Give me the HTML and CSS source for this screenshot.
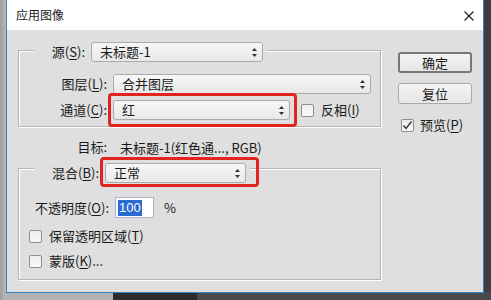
FILE: index.html
```html
<!DOCTYPE html>
<html lang="zh-CN">
<head>
    <meta charset="UTF-8">
    <meta name="viewport" content="width=device-width, initial-scale=1.0">
    <title>应用图像</title>
    <link rel="stylesheet" href="styles.css">
</head>

<body>
    <div class="dialog">
        <div class="titlebar">
            <span class="title">应用图像</span>
            <svg class="close" width="10" height="10" viewBox="0 0 10 10">
                <path d="M0.5 0.5 L9.5 9.5 M9.5 0.5 L0.5 9.5" stroke="#1a1a1a" stroke-width="1.1" fill="none"/>
            </svg>
        </div>

        <div class="content">
            <div class="main">
                <!-- nguồn -->
                <div class="group group-source">
                    <div class="group-head">
                        <span class="head-label source-label">源(<u>S</u>):</span>
                        <div class="select select-source">
                            <span>未标题-1</span>
                            <svg class="arrows" width="5" height="9" viewBox="0 0 5 9"><path d="M2.5 0 L5 3 L0 3 Z M2.5 9 L5 6 L0 6 Z" fill="#333"/></svg>
                        </div>
                    </div>
                    <div class="row row-layer">
                        <span class="row-label">图层(<u>L</u>):</span>
                        <div class="select select-layer">
                            <span>合并图层</span>
                            <svg class="arrows" width="5" height="9" viewBox="0 0 5 9"><path d="M2.5 0 L5 3 L0 3 Z M2.5 9 L5 6 L0 6 Z" fill="#333"/></svg>
                        </div>
                    </div>
                    <div class="row row-channel">
                        <span class="row-label">通道(<u>C</u>):</span>
                        <div class="mark mark-channel">
                            <div class="select select-channel">
                                <span>红</span>
                                <svg class="arrows" width="5" height="9" viewBox="0 0 5 9"><path d="M2.5 0 L5 3 L0 3 Z M2.5 9 L5 6 L0 6 Z" fill="#333"/></svg>
                            </div>
                        </div>
                        <label class="check check-invert"><span class="box"></span><span>反相(<u>I</u>)</span></label>
                    </div>
                </div>

                <div class="target">
                    <span class="target-label">目标:</span>
                    <span>未标题-1(红色通..., RGB)</span>
                </div>

                <!-- hòa trộn -->
                <div class="group group-blend">
                    <div class="group-head">
                        <span class="head-label blend-label">混合(<u>B</u>):</span>
                        <div class="mark mark-blend">
                            <div class="select select-blend">
                                <span>正常</span>
                                <svg class="arrows" width="5" height="9" viewBox="0 0 5 9"><path d="M2.5 0 L5 3 L0 3 Z M2.5 9 L5 6 L0 6 Z" fill="#333"/></svg>
                            </div>
                        </div>
                    </div>
                    <div class="row row-opacity">
                        <span class="opacity-label">不透明度(<u>O</u>):</span>
                        <div class="opacity-input"><span class="selected">100</span></div>
                        <span class="percent">%</span>
                    </div>
                    <label class="check check-row check-keep"><span class="box"></span><span>保留透明区域(<u>T</u>)</span></label>
                    <label class="check check-row check-mask"><span class="box"></span><span>蒙版(<u>K</u>)...</span></label>
                </div>
            </div>

            <div class="side">
                <button class="btn btn-default">确定</button>
                <button class="btn btn-reset">复位</button>
                <label class="check check-preview">
                    <span class="box">
                        <svg width="11" height="11" viewBox="0 0 11 11"><path d="M1.5 5.5 L4 8.5 L9.5 1.5" stroke="#333" stroke-width="1.4" fill="none"/></svg>
                    </span>
                    <span>预览(<u>P</u>)</span>
                </label>
            </div>
        </div>
    </div>
</body>
</html>
```

FILE: styles.css
```css
/* hộp thoại Apply Image */
* {
   box-sizing: border-box;
}

body {
   margin: 0;
   height: 300px;
   overflow: hidden;
   font-family: "Noto Sans CJK SC", "Noto Sans", sans-serif;
   font-size: 13px;
   color: #1a1a1a;
   background:
      linear-gradient(to right, #9d9d9d, #b9b9b9) left top / 6px 100% no-repeat,
      linear-gradient(to right, #b3b3b3 0 113px, #2c2c2c 113px 197px, #4a4a4a 197px) left bottom / 100% 8px no-repeat,
      #3e3e3e;
}

u {
   text-decoration-thickness: 1px;
   text-underline-offset: 2px;
}

.dialog {
   margin-left: 6px;
   width: 478px;
   height: 293px;
   border: 1px solid #2f84cc;
   border-top: none;
   background-color: #dfdfdf;
}

.titlebar {
   height: 30px;
   background-color: #fff;
   display: flex;
   align-items: center;
   justify-content: space-between;
   padding: 0 9px 0 9px;
}

.title {
   font-size: 12px;
   line-height: 16px;
}

.close {
   margin-top: 1px;
}

.content {
   display: flex;
   align-items: flex-start;
   padding: 20px 0 0 11px;
}

.main {
   width: 363px;
}

/* khung nhóm kiểu khắc */
.group {
   border: 1px solid #b4b4b4;
   box-shadow: inset 1px 1px 0 #fff, 1px 1px 0 #fff;
}

.group-head {
   display: flex;
   align-items: center;
   width: fit-content;
   height: 20px;
   margin-left: 15px;
   padding: 0 4px;
   gap: 6px;
   background-color: #dfdfdf;
}

.head-label,
.row-label,
.target-label,
.opacity-label {
   text-align: right;
   line-height: 20px;
   white-space: nowrap;
}

.source-label {
   width: 47px;
}

.blend-label {
   width: 61px;
}

.group-source {
   padding-bottom: 6px;
}

.group-source .group-head {
   margin-top: -9px;
}

.group-blend {
   margin-top: 11px;
   padding-bottom: 8px;
}

.group-blend .group-head {
   margin-top: -6px;
}

.row {
   display: flex;
   align-items: center;
   height: 20px;
   gap: 6px;
}

.row-label {
   width: 88px;
}

.row-layer {
   margin-top: 12px;
}

.row-channel {
   margin-top: 6px;
}

/* hộp chọn */
.select {
   display: flex;
   align-items: center;
   justify-content: space-between;
   height: 20px;
   padding: 0 5px 0 8px;
   border: 1px solid #ababab;
   border-radius: 3px;
   background: linear-gradient(#f7f7f7, #e8e8e8);
   line-height: 18px;
}

.select-source {
   width: 172px;
}

.select-layer {
   width: 258px;
}

.select-channel {
   width: 177px;
}

.select-blend {
   width: 141px;
}

/* khung đỏ đánh dấu */
.mark {
   position: relative;
}

.mark::after {
   content: "";
   position: absolute;
   border: 3px solid #e2241e;
   border-radius: 4px;
}

.mark-channel::after {
   inset: -7px -7px -7px -5px;
}

.mark-blend::after {
   inset: -6px -13px -4px -5px;
}

.check {
   display: flex;
   align-items: center;
   gap: 7px;
   line-height: 20px;
   white-space: nowrap;
}

.box {
   display: flex;
   align-items: center;
   justify-content: center;
   width: 13px;
   height: 13px;
   border: 1px solid #8e8e8e;
   border-radius: 2px;
   background: linear-gradient(#eeeeee, #f8f8f8);
}

.check-invert {
   margin-left: 5px;
}

.target {
   display: flex;
   gap: 13px;
   margin-top: 10px;
   height: 20px;
   align-items: center;
}

.target-label {
   width: 89px;
}

.row-opacity {
   margin-top: 14px;
   height: 21px;
}

.opacity-label {
   width: 90px;
}

.opacity-input {
   display: flex;
   align-items: center;
   width: 39px;
   height: 21px;
   padding-left: 2px;
   border: 1px solid #a9b6c9;
   background-color: #fff;
}

.selected {
   font-family: "Liberation Sans", Arial, sans-serif;
   font-size: 13px;
   line-height: 16px;
   padding: 0 1px;
   background-color: #2a6bd3;
   color: #fff;
}

.percent {
   margin-left: 4px;
}

.check-row {
   height: 20px;
   padding-left: 10px;
}

.check-keep {
   margin-top: 8px;
}

.check-mask {
   margin-top: 5px;
}

/* cột nút bên phải */
.side {
   display: flex;
   flex-direction: column;
   margin-left: 17px;
   padding-top: 2px;
}

.btn {
   width: 74px;
   height: 21px;
   padding: 0;
   font-family: inherit;
   font-size: 13px;
   line-height: 17px;
   color: #1a1a1a;
   border: 1px solid #a9a9a9;
   border-radius: 3px;
   background: linear-gradient(#f4f4f4, #e6e6e6);
}

.btn-default {
   border: 2px solid #777;
}

.btn-reset {
   margin-top: 10px;
}

.check-preview {
   margin-top: 11px;
   padding-left: 3px;
   gap: 6px;
}
```
